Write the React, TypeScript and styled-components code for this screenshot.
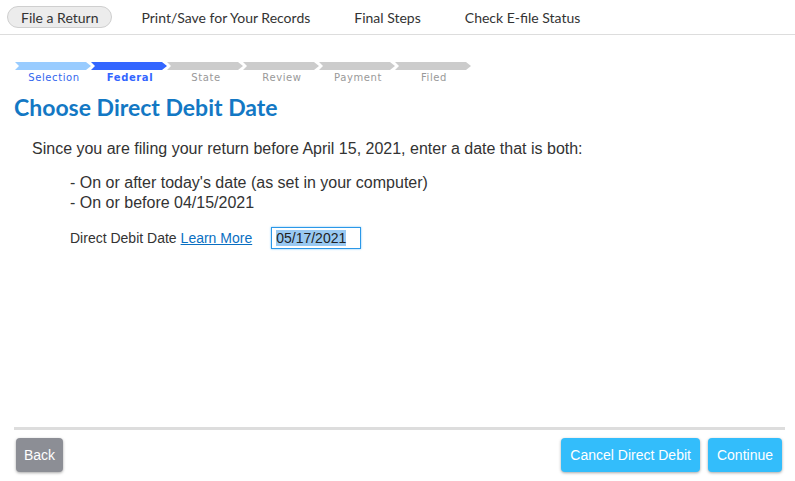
import styled, { createGlobalStyle } from 'styled-components';

const GlobalStyle = createGlobalStyle`
  html, body {
    margin: 0;
    padding: 0;
    background: #fff;
  }
`;

const Page = styled.div`
  width: 795px;
  height: 481px;
  display: flex;
  flex-direction: column;
  font-family: Arial, "Liberation Sans", sans-serif;
  color: #333;
`;

const TopNav = styled.nav`
  height: 34px;
  border-bottom: 1px solid #ddd;
  display: flex;
  align-items: center;
  padding-left: 7px;
`;

const NavItem = styled.a<{ $active?: boolean }>`
  font-family: Lato, "Open Sans", sans-serif;
  font-size: 14px;
  color: #333;
  text-decoration: none;
  height: 22px;
  line-height: 22px;
  box-sizing: border-box;
  padding: 0 ${({ $active }) => ($active ? '13px' : '0')};
  margin-right: ${({ $active }) => ($active ? '28px' : '42px')};
  border-radius: 12px;
  background: ${({ $active }) => ($active ? '#ececec' : 'transparent')};
  border: 1px solid ${({ $active }) => ($active ? '#cfcfcf' : 'transparent')};
`;

const Main = styled.main`
  flex: 1;
  padding: 27px 14px 0 14px;
  display: flex;
  flex-direction: column;
`;

const Steps = styled.div`
  display: flex;
  padding-left: 1px;
`;

const Step = styled.div`
  width: 76px;
  display: flex;
  flex-direction: column;
  align-items: center;
`;

const StepBar = styled.div<{ $color: string }>`
  width: 100%;
  height: 8px;
  background: ${({ $color }) => $color};
  clip-path: polygon(0 0, calc(100% - 5px) 0, 100% 50%, calc(100% - 5px) 100%, 0 100%, 4px 50%);
`;

const StepLabel = styled.span<{ $color: string; $bold?: boolean }>`
  font-family: "DejaVu Sans", Verdana, sans-serif;
  font-size: 10px;
  letter-spacing: 0.6px;
  margin-top: 2px;
  padding-left: 2px;
  color: ${({ $color }) => $color};
  font-weight: ${({ $bold }) => ($bold ? 700 : 400)};
`;

const Title = styled.h1`
  margin: 10px 0 0 0;
  font-family: Lato, "Open Sans", sans-serif;
  font-weight: 700;
  font-size: 23px;
  color: #1378c4;
`;

const Intro = styled.p`
  margin: 19px 0 0 18px;
  font-size: 16px;
`;

const Conditions = styled.ul`
  list-style: none;
  margin: 15px 0 0 56px;
  padding: 0;
  font-size: 16px;

  li {
    line-height: 20px;
  }
`;

const DateRow = styled.div`
  margin: 14px 0 0 56px;
  display: flex;
  align-items: center;
  font-size: 14px;
`;

const LearnMore = styled.a`
  color: #0a6fc2;
  text-decoration: underline;
  margin-left: 4px;
  margin-right: 19px;
`;

const DateInput = styled.div`
  width: 90px;
  height: 22px;
  box-sizing: border-box;
  border: 1px solid #2b98e8;
  box-shadow: 0 0 2px #7cc4f5;
  padding: 2px 4px;
  font-size: 14px;
  line-height: 16px;

  span {
    background: #99c9f2;
    color: #222;
  }
`;

const Footer = styled.footer`
  margin: 0 10px 0 14px;
  border-top: 3px solid #ddd;
  padding: 8px 3px 9px 2px;
  display: flex;
  align-items: center;
  gap: 8px;
`;

const Button = styled.button<{ $variant: 'back' | 'primary' }>`
  height: 34px;
  border: none;
  border-radius: 4px;
  padding: 0 ${({ $variant }) => ($variant === 'back' ? '8px' : '9px')};
  font-family: Arial, "Liberation Sans", sans-serif;
  font-size: 14px;
  color: #fff;
  background: ${({ $variant }) => ($variant === 'back' ? '#8c8e95' : '#33bdfb')};
  box-shadow: 0 1px 3px rgba(0, 0, 0, 0.35);
`;

const Spacer = styled.div`
  flex: 1;
`;

const steps = [
  { label: 'Selection', bar: '#99ccff', text: '#3366ee' },
  { label: 'Federal', bar: '#3366ff', text: '#3366ff', bold: true },
  { label: 'State', bar: '#cccccc', text: '#999' },
  { label: 'Review', bar: '#cccccc', text: '#999' },
  { label: 'Payment', bar: '#cccccc', text: '#999' },
  { label: 'Filed', bar: '#cccccc', text: '#999' },
];

export default function App() {
  return (
    <Page>
      <GlobalStyle />
      <TopNav>
        <NavItem $active>File a Return</NavItem>
        <NavItem>Print/Save for Your Records</NavItem>
        <NavItem>Final Steps</NavItem>
        <NavItem>Check E-file Status</NavItem>
      </TopNav>
      <Main>
        <Steps>
          {steps.map((s) => (
            <Step key={s.label}>
              <StepBar $color={s.bar} />
              <StepLabel $color={s.text} $bold={s.bold}>{s.label}</StepLabel>
            </Step>
          ))}
        </Steps>
        <Title>Choose Direct Debit Date</Title>
        <Intro>Since you are filing your return before April 15, 2021, enter a date that is both:</Intro>
        <Conditions>
          <li>- On or after today's date (as set in your computer)</li>
          <li>- On or before 04/15/2021</li>
        </Conditions>
        <DateRow>
          Direct Debit Date
          <LearnMore href="#">Learn More</LearnMore>
          <DateInput><span>05/17/2021</span></DateInput>
        </DateRow>
      </Main>
      <Footer>
        <Button $variant="back">Back</Button>
        <Spacer />
        <Button $variant="primary">Cancel Direct Debit</Button>
        <Button $variant="primary">Continue</Button>
      </Footer>
    </Page>
  );
}
